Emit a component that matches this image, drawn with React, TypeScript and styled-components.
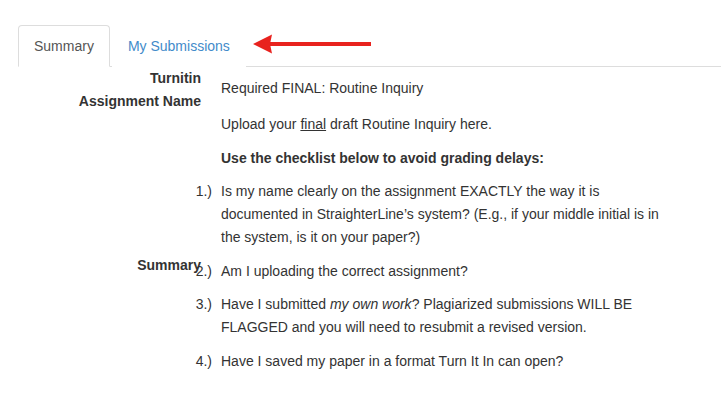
import React from "react";
import styled, { createGlobalStyle } from "styled-components";

const GlobalStyle = createGlobalStyle`
    html, body {
        margin: 0;
        padding: 0;
        background: #fff;
    }
    body {
        font-family: "Liberation Sans", Arial, Helvetica, sans-serif;
        font-size: 14px;
        color: #333;
    }
`

const Page = styled.div`
    padding: 25px 0 0 18px;
`

const TabBar = styled.ul`
    display: flex;
    align-items: center;
    list-style: none;
    margin: 0;
    padding: 0;
    border-bottom: 1px solid #ddd;
`

const Tab = styled.li<{ $active?: boolean }>`
    margin: 0 2px -1px 0;
    a {
        display: block;
        padding: 10px 15px;
        line-height: 20px;
        border: 1px solid ${({ $active }) => $active ? "#ddd" : "transparent"};
        border-bottom-color: ${({ $active }) => $active ? "#fff" : "transparent"};
        border-radius: 4px 4px 0 0;
        background: #fff;
        color: ${({ $active }) => $active ? "#555" : "#428bca"};
        text-decoration: none;
        cursor: ${({ $active }) => $active ? "default" : "pointer"};
    }
`

const Pointer = styled.li`
    margin: -3px 0 0 5px;
    display: flex;
    svg {
        display: block;
    }
`

const Fields = styled.div`
    display: grid;
    grid-template-columns: 183px 1fr;
    column-gap: 20px;
`

const Label = styled.div<{ $tight?: boolean }>`
    text-align: right;
    font-weight: bold;
    line-height: ${({ $tight }) => $tight ? "16px" : "23px"};
    margin-top: ${({ $tight }) => $tight ? "-3px" : "0"};
    align-self: start;
`

const Value = styled.div<{ $first?: boolean; $bold?: boolean }>`
    line-height: 23px;
    padding-top: ${({ $first }) => $first ? "10px" : "0"};
    margin-bottom: 10.5px;
    font-weight: ${({ $bold }) => $bold ? "bold" : "normal"};
    u {
        text-decoration: underline;
    }
`

const Item = styled.div<{ $num: number }>`
    line-height: 23px;
    margin-bottom: 10.5px;
    max-width: 452px;
    &::before {
        content: "${({ $num }) => $num}.)";
        display: inline-block;
        width: 30px;
        margin-left: -39px;
        margin-right: 9px;
        text-align: right;
    }
`

function Arrow(): JSX.Element {
    return (
        <svg width="120" height="20" viewBox="0 0 120 20">
            <rect x="17" y="8" width="101" height="4" fill="#e8221e" />
            <polygon points="0,10 19,0.5 17,10 19,19.5" fill="#e8221e" />
        </svg>
    )
}

export default function App(): JSX.Element {
    return (
        <Page>
            <GlobalStyle />
            <TabBar>
                <Tab $active><a>Summary</a></Tab>
                <Tab><a href="#">My Submissions</a></Tab>
                <Pointer><Arrow /></Pointer>
            </TabBar>
            <Fields>
                <Label>Turnitin<br />Assignment Name</Label>
                <Value $first>Required FINAL: Routine Inquiry</Value>

                <div />
                <Value>Upload your <u>final</u> draft Routine Inquiry here.</Value>

                <div />
                <Value $bold>Use the checklist below to avoid grading delays:</Value>

                <div />
                <Item $num={1}>Is my name clearly on the assignment EXACTLY the way it is documented in StraighterLine’s system? (E.g., if your middle initial is in the system, is it on your paper?)</Item>

                <Label $tight>Summary</Label>
                <Item $num={2}>Am I uploading the correct assignment?</Item>

                <div />
                <Item $num={3}>Have I submitted <i>my own work</i>? Plagiarized submissions WILL BE FLAGGED and you will need to resubmit a revised version.</Item>

                <div />
                <Item $num={4}>Have I saved my paper in a format Turn It In can open?</Item>
            </Fields>
        </Page>
    )
}
